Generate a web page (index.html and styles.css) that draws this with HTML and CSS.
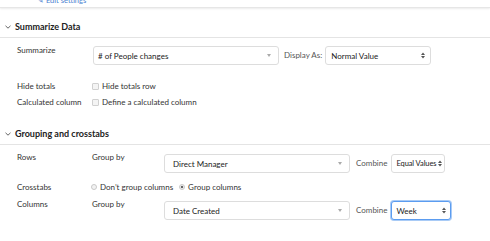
FILE: index.html
```html
<!DOCTYPE html>
<html lang="en">

<head>
  <meta charset="UTF-8" />
  <title>Report settings</title>
  <link rel="stylesheet" href="styles.css">
</head>

<body>

  <!-- top strip, mostly scrolled out of view -->
  <div class="top-strip">
    <span class="top-link">&#9998; Edit settings</span>
  </div>

  <!-- Summarize Data -->
  <div class="section-head">
    <svg class="chevron" width="6" height="4" viewBox="0 0 6 4"><path d="M0.5 0.8 L3 3.2 L5.5 0.8" fill="none" stroke="#666" stroke-width="1"/></svg>
    <span>Summarize Data</span>
  </div>

  <div class="row row-summarize">
    <div class="label">Summarize</div>
    <div class="select select-wide">
      <span># of People changes</span>
      <span class="caret"></span>
    </div>
    <div class="inline-label display-as">Display As:</div>
    <div class="select select-display">
      <span>Normal Value</span>
      <svg class="updown" width="4" height="7" viewBox="0 0 4 7"><path d="M0 3 L2 0.4 L4 3 Z M0 4 L2 6.6 L4 4 Z" fill="#555"/></svg>
    </div>
  </div>

  <div class="row row-check row-hide">
    <div class="label">Hide totals</div>
    <label class="check"><span class="box"></span>Hide totals row</label>
  </div>

  <div class="row row-check row-calc">
    <div class="label">Calculated column</div>
    <label class="check"><span class="box"></span>Define a calculated column</label>
  </div>

  <!-- Grouping and crosstabs -->
  <div class="section-head section-grouping">
    <svg class="chevron" width="6" height="4" viewBox="0 0 6 4"><path d="M0.5 0.8 L3 3.2 L5.5 0.8" fill="none" stroke="#666" stroke-width="1"/></svg>
    <span>Grouping and crosstabs</span>
  </div>

  <div class="row row-rows">
    <div class="label">Rows</div>
    <div class="sublabel">Group by</div>
    <div class="select select-group">
      <span>Direct Manager</span>
      <span class="caret"></span>
    </div>
    <div class="inline-label combine">Combine</div>
    <div class="select select-equal">
      <span>Equal Values</span>
      <svg class="updown" width="4" height="7" viewBox="0 0 4 7"><path d="M0 3 L2 0.4 L4 3 Z M0 4 L2 6.6 L4 4 Z" fill="#555"/></svg>
    </div>
  </div>

  <div class="row row-check row-cross">
    <div class="label">Crosstabs</div>
    <label class="check"><span class="radio"></span>Don’t group columns</label>
    <label class="check check-second"><span class="radio radio-on"></span>Group columns</label>
  </div>

  <div class="row row-columns">
    <div class="label">Columns</div>
    <div class="sublabel">Group by</div>
    <div class="select select-group">
      <span>Date Created</span>
      <span class="caret"></span>
    </div>
    <div class="inline-label combine">Combine</div>
    <div class="select select-week">
      <span>Week</span>
      <svg class="updown" width="4" height="7" viewBox="0 0 4 7"><path d="M0 3 L2 0.4 L4 3 Z M0 4 L2 6.6 L4 4 Z" fill="#555"/></svg>
    </div>
  </div>

</body>

</html>
```

FILE: styles.css
```css
body {
  margin: 0;
  background: #fff;
  font-family: Lato, "Open Sans", sans-serif;
  font-size: 8px;
  color: #333;
  width: 490px;
  height: 241px;
  overflow: hidden;
}

.top-strip {
  height: 7px;
  overflow: hidden;
  padding-left: 37px;
  border-bottom: 1px solid #e6e6e6;
  box-shadow: 0 1px 2px rgba(0, 0, 0, 0.08);
}

.top-link {
  display: block;
  margin-top: -4px;
  line-height: 10px;
  font-size: 7.5px;
  color: #4a7fd0;
}

.section-head {
  display: flex;
  align-items: center;
  padding: 12px 0 3px 5px;
  line-height: 14px;
  font-size: 9px;
  font-weight: 700;
  color: #222;
  border-bottom: 1px solid #e4e4e4;
}

.section-grouping {
  padding-top: 19px;
}

.chevron {
  margin-right: 4px;
}

.row {
  display: flex;
  align-items: flex-start;
  padding-left: 17px;
  white-space: nowrap;
}

.label {
  width: 75px;
  line-height: 10px;
  flex-shrink: 0;
}

.sublabel {
  width: 72px;
  line-height: 10px;
  flex-shrink: 0;
}

.row-summarize {
  margin-top: 6px;
}

.row-summarize .label {
  width: 76px;
  margin-top: 1px;
}

.row-check {
  line-height: 12px;
}

.row-check .label {
  line-height: 12px;
}

.row-hide {
  margin-top: 15px;
}

.row-calc {
  margin-top: 4px;
}

.row-rows {
  margin-top: 7px;
}

.row-cross {
  margin-top: 8px;
}

.row-columns {
  margin-top: 6px;
}

.select {
  box-sizing: border-box;
  display: flex;
  align-items: center;
  justify-content: space-between;
  margin-top: 2px;
  height: 19px;
  padding: 0 6px 0 5px;
  border: 1px solid #ddd;
  border-radius: 3px;
  background: #fff;
  color: #222;
  flex-shrink: 0;
}

.select-wide {
  width: 186px;
  padding-left: 4px;
  padding-right: 7px;
}

.select-display {
  width: 106px;
  padding-right: 5px;
}

.select-group {
  width: 186px;
  padding-left: 8px;
  padding-right: 7px;
}

.select-equal {
  width: 54px;
  padding: 0 2px 0 4px;
  font-size: 7.5px;
  letter-spacing: -0.1px;
}

.select-week {
  width: 60px;
  padding: 0 4px 0 4px;
  border: 1px solid #5b9cf0;
  box-shadow: 0 0 0 1px #a9cbf6;
}

.inline-label {
  margin: 2px 5px 0 6px;
  line-height: 19px;
  color: #555;
}

.display-as {
  margin-left: 5px;
  margin-right: 3px;
}

.combine {
  margin-right: 4px;
}

.caret {
  width: 0;
  height: 0;
  border-left: 2.5px solid transparent;
  border-right: 2.5px solid transparent;
  border-top: 3px solid #aaa;
}

.updown {
  flex-shrink: 0;
}

.check {
  display: flex;
  align-items: center;
}

.box {
  box-sizing: border-box;
  width: 7px;
  height: 7px;
  margin-right: 3px;
  border: 1px solid #d0d0d0;
  border-radius: 1px;
  background: #f4f4f4;
}

.radio {
  box-sizing: border-box;
  width: 6px;
  height: 6px;
  margin: 0 3px 0 -1px;
  border: 1px solid #c8c8c8;
  border-radius: 50%;
  background: #f2f2f2;
}

.radio-on {
  background: radial-gradient(circle, #666 0 1.3px, #f2f2f2 1.6px);
}

.check-second {
  margin-left: 7px;
}
```
